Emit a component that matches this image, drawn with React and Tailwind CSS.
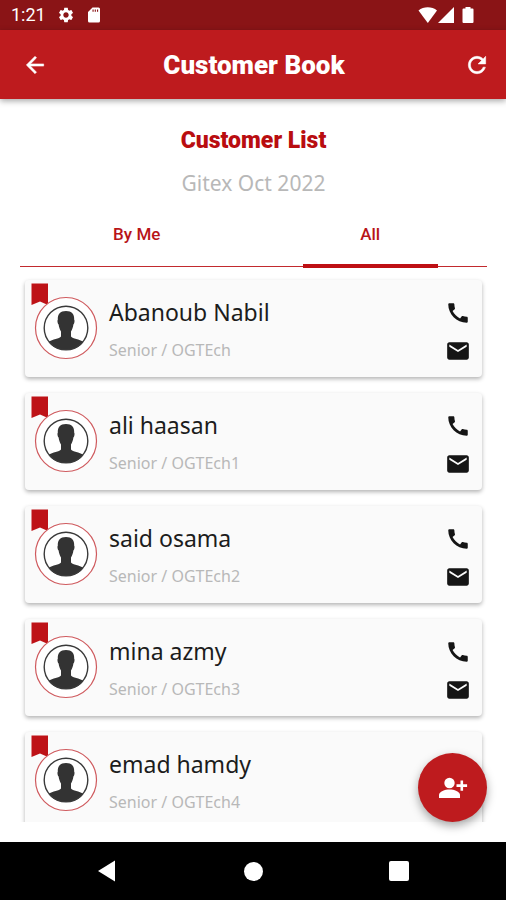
import React, { useState } from "react";

const customers = [
  { name: "Abanoub Nabil", role: "Senior / OGTEch" },
  { name: "ali haasan", role: "Senior / OGTEch1" },
  { name: "said osama", role: "Senior / OGTEch2" },
  { name: "mina azmy", role: "Senior / OGTEch3" },
  { name: "emad hamdy", role: "Senior / OGTEch4" },
];

function Icon({ d, className }) {
  return (
    <svg viewBox="0 0 24 24" fill="currentColor" fillRule="evenodd" aria-hidden="true" className={className}>
      <path d={d} />
    </svg>
  );
}

const GEAR =
  "M19.14 12.94c.04-.3.06-.61.06-.94 0-.32-.02-.64-.07-.94l2.03-1.58c.18-.14.23-.41.12-.61l-1.92-3.32c-.12-.22-.37-.29-.59-.22l-2.39.96c-.5-.38-1.03-.7-1.62-.94l-.36-2.54c-.04-.24-.24-.41-.48-.41h-3.84c-.24 0-.43.17-.47.41l-.36 2.54c-.59.24-1.13.57-1.62.94l-2.39-.96c-.22-.08-.47 0-.59.22L2.74 8.87c-.12.21-.08.47.12.61l2.03 1.58c-.05.3-.09.63-.09.94s.02.64.07.94l-2.03 1.58c-.18.14-.23.41-.12.61l1.92 3.32c.12.22.37.29.59.22l2.39-.96c.5.38 1.03.7 1.62.94l.36 2.54c.05.24.24.41.48.41h3.84c.24 0 .44-.17.47-.41l.36-2.54c.59-.24 1.13-.56 1.62-.94l2.39.96c.22.08.47 0 .59-.22l1.92-3.32c.12-.22.07-.47-.12-.61l-2.01-1.58zM12 15.6c-1.98 0-3.6-1.62-3.6-3.6s1.62-3.6 3.6-3.6 3.6 1.62 3.6 3.6-1.62 3.6-3.6 3.6z";
const SD_CARD =
  "M20 4v16a2 2 0 0 1-2 2H6a2 2 0 0 1-2-2V8l6-6h8a2 2 0 0 1 2 2zM11.500 4.500h-1.500v3h1.500zM14.500 4.500H13v3h1.500zM17.500 4.500H16v3h1.500z";
const BACK = "M20 11H7.83l5.59-5.59L12 4l-8 8 8 8 1.41-1.41L7.83 13H20v-2z";
const REFRESH =
  "M17.65 6.35C16.2 4.9 14.21 4 12 4c-4.42 0-7.99 3.58-7.99 8s3.57 8 7.99 8c3.73 0 6.84-2.55 7.73-6h-2.08c-.82 2.33-3.04 4-5.65 4-3.31 0-6-2.69-6-6s2.69-6 6-6c1.66 0 3.14.69 4.22 1.78L13 11h7V4l-2.35 2.35z";
const PHONE =
  "M20.010 15.380c-1.230 0-2.420-.2-3.530-.56-.35-.12-.74-.03-1.010.24l-1.570 1.970c-2.830-1.350-5.480-3.900-6.890-6.830l1.950-1.660c.27-.28.35-.67.24-1.020-.37-1.110-.56-2.300-.56-3.530 0-.54-.45-.99-.99-.99H4.190C3.650 3 3 3.240 3 3.990 3 13.280 10.730 21 20.010 21c.71 0 .99-.63.99-1.180v-3.450c0-.54-.45-.99-.99-.99z";
const MAIL =
  "M20 4H4c-1.1 0-1.99.9-1.99 2L2 18c0 1.1.9 2 2 2h16c1.1 0 2-.9 2-2V6c0-1.1-.9-2-2-2zm0 4l-8 5-8-5V6l8 5 8-5v2z";

function StatusBar() {
  return (
    <div className="flex h-[30px] shrink-0 items-center justify-between bg-[#8a1416] pr-8 pl-[11px] text-white">
      <div className="flex items-center">
        <span className="w-[46px] text-lg leading-5">1:21</span>
        <Icon d={GEAR} className="size-[18px]" />
        <Icon d={SD_CARD} className="ml-2.5 size-[18px]" />
      </div>
      <svg viewBox="0 0 56 18" fill="currentColor" aria-hidden="true" className="h-[18px] w-14">
        <path d="M0.500 4.500C5.500 0.200 14 0.200 19 4.500L9.800 17Z" />
        <path d="M20 17L36 1V17Z" />
        <path d="M45.500 2.500h2V1h5v1.500h2a1 1 0 0 1 1 1V16a1 1 0 0 1-1 1h-9a1 1 0 0 1-1-1V3.500a1 1 0 0 1 1-1Z" />
      </svg>
    </div>
  );
}

function Header() {
  return (
    <header className="relative z-10 flex h-[69px] shrink-0 items-center justify-between bg-[#be1b1e] pr-4 pl-[22px] text-white shadow-[0_2px_6px_rgba(0,0,0,0.35)]">
      <button type="button" aria-label="Back" className="w-[26px]">
        <Icon d={BACK} className="size-[26px] stroke-current stroke-[0.5]" />
      </button>
      <h1 className="pr-1 text-[26px] leading-8 font-black">Customer Book</h1>
      <button type="button" aria-label="Refresh" className="w-[26px]">
        <Icon d={REFRESH} className="size-[26px] stroke-current stroke-[0.5]" />
      </button>
    </header>
  );
}

function Avatar() {
  return (
    <svg viewBox="0 0 68 80" aria-hidden="true" className="ml-1.5 h-20 w-[68px] shrink-0">
      <path d="M0.500 3.500H17V25L9 21.500L0.500 25Z" fill="#be1217" />
      <circle cx="35" cy="48" r="30.500" fill="#fff" stroke="#cf5a5e" strokeWidth="1.200" />
      <path
        d="M35 31c-5.800 0-8.500 3-8.200 8.800-.7.600-.3 3.700.8 4.800.4 2.900 1.200 5 2.400 6.800v5.200c-1.500 2.200-8.500 2.700-12.500 5.400C21.500 67.200 27.500 70 35 70s13.500-2.800 17.500-8c-4-2.700-11-3.200-12.500-5.400v-5.200c1.200-1.800 2-3.900 2.400-6.800 1.100-1.100 1.500-4.200.8-4.800.3-5.800-2.400-8.800-8.200-8.800Z"
        fill="#333"
      />
      <circle cx="35" cy="48" r="21.800" fill="none" stroke="#3a3a3a" strokeWidth="1.400" />
    </svg>
  );
}

function CustomerCard({ name, role }) {
  return (
    <li className="flex h-[97px] shrink-0 rounded-sm bg-[#fafafa] pr-[11px] shadow-[0_2px_4px_rgba(0,0,0,0.3)]">
      <Avatar />
      <div className="ml-[10px] flex flex-1 flex-col gap-2.5 pt-4 font-['Noto_Sans',sans-serif]">
        <h3 className="text-[23px] leading-8 text-[#1c1c1c]">{name}</h3>
        <p className="text-base leading-6 text-[#b8b8b8]">{role}</p>
      </div>
      <div className="flex flex-col gap-3 pt-5 text-[#151515]">
        <button type="button" aria-label={`Call ${name}`}>
          <Icon d={PHONE} className="size-[26px]" />
        </button>
        <button type="button" aria-label={`Email ${name}`}>
          <Icon d={MAIL} className="size-[26px]" />
        </button>
      </div>
    </li>
  );
}

function NavBar() {
  return (
    <nav className="flex h-[58px] shrink-0 items-center justify-center gap-[126px] bg-black text-white">
      <button type="button" aria-label="System back">
        <svg viewBox="0 0 20 22" fill="currentColor" className="h-[22px] w-5">
          <path d="M0 11L17 0.500V21.500Z" />
        </svg>
      </button>
      <button type="button" aria-label="Home" className="size-[19px] rounded-full bg-white" />
      <button type="button" aria-label="Recent apps" className="size-5 rounded-xs bg-white" />
    </nav>
  );
}

export default function App() {
  const [tab, setTab] = useState("All");
  return (
    <div className="flex h-screen flex-col bg-white font-[Roboto,sans-serif]">
      <StatusBar />
      <Header />
      <main className="relative flex min-h-0 flex-1 flex-col pt-[26px] pr-[19px] pb-5 pl-5">
        <h2 className="text-center text-[23px] leading-8 font-black text-[#b90d10]">Customer List</h2>
        <p className="mt-2.5 text-center font-['Noto_Sans',sans-serif] text-[21px] leading-8 text-[#b8b8b8]">
          Gitex Oct 2022
        </p>
        <div role="tablist" className="mt-2 grid shrink-0 grid-cols-2">
          {["By Me", "All"].map((label) => (
            <button
              key={label}
              type="button"
              role="tab"
              aria-selected={tab === label}
              onClick={() => setTab(label)}
              className="flex h-[61px] flex-col items-center justify-between pt-[15px] text-[17px] leading-6 font-medium text-[#b81418]"
            >
              {label}
              <span className="flex h-1 w-full items-center justify-center">
                <span className="h-px flex-1 bg-[#c22a2e]" />
                <span className={tab === label ? "h-1 w-[135px] bg-[#be0f14]" : "h-px w-[135px] bg-[#c22a2e]"} />
                <span className="h-px flex-1 bg-[#c22a2e]" />
              </span>
            </button>
          ))}
        </div>
        <ul className="flex min-h-0 flex-1 flex-col gap-4 overflow-hidden px-[5px] pt-3">
          {customers.map((c) => (
            <CustomerCard key={c.name} {...c} />
          ))}
        </ul>
        <button
          type="button"
          aria-label="Add customer"
          className="absolute right-[19px] bottom-5 flex size-[69px] items-center justify-center rounded-full bg-[#be1b1e] text-white shadow-[0_4px_10px_rgba(0,0,0,0.35)]"
        >
          <svg viewBox="0 0 30 24" fill="currentColor" aria-hidden="true" className="h-6 w-[30px]">
            <circle cx="11.500" cy="7" r="5.200" />
            <path d="M1 22V19C1 15.500 7 13.500 11.500 13.500S22 15.500 22 19V22Z" />
            <path d="M22.500 4.500h2.600v3.800h4v2.600h-4v3.800h-2.600v-3.800h-4V8.300h4Z" />
          </svg>
        </button>
      </main>
      <NavBar />
    </div>
  );
}
